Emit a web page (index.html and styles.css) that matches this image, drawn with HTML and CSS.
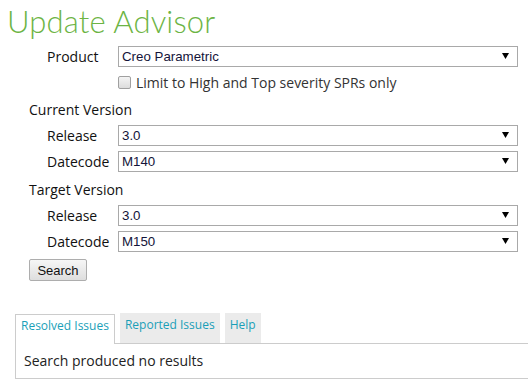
FILE: index.html
```html
<!DOCTYPE html>
<html>
<head>
<meta charset="utf-8">
<link rel="stylesheet" href="styles.css">
</head>
<body>
<h1 class="title">Update Advisor</h1>
<div class="form">
  <div class="row sub">
    <span class="label">Product</span>
    <div class="select"><span>Creo Parametric</span><svg class="arrow" width="7" height="6" viewBox="0 0 7 6"><path d="M0 0H7L3.5 6Z" fill="#000"/></svg></div>
  </div>
  <div class="row check">
    <span class="box"></span>
    <span class="checktext">Limit to High and Top severity SPRs only</span>
  </div>
  <div class="row head">Current Version</div>
  <div class="row sub">
    <span class="label">Release</span>
    <div class="select"><span>3.0</span><svg class="arrow" width="7" height="6" viewBox="0 0 7 6"><path d="M0 0H7L3.5 6Z" fill="#000"/></svg></div>
  </div>
  <div class="row sub">
    <span class="label">Datecode</span>
    <div class="select"><span>M140</span><svg class="arrow" width="7" height="6" viewBox="0 0 7 6"><path d="M0 0H7L3.5 6Z" fill="#000"/></svg></div>
  </div>
  <div class="row head second">Target Version</div>
  <div class="row sub">
    <span class="label">Release</span>
    <div class="select"><span>3.0</span><svg class="arrow" width="7" height="6" viewBox="0 0 7 6"><path d="M0 0H7L3.5 6Z" fill="#000"/></svg></div>
  </div>
  <div class="row sub">
    <span class="label">Datecode</span>
    <div class="select"><span>M150</span><svg class="arrow" width="7" height="6" viewBox="0 0 7 6"><path d="M0 0H7L3.5 6Z" fill="#000"/></svg></div>
  </div>
  <div class="btnrow"><button class="btn">Search</button></div>
</div>
<div class="tabs">
  <div class="tabbar">
    <span class="tab active">Resolved Issues</span>
    <span class="tab">Reported Issues</span>
    <span class="tab">Help</span>
  </div>
  <div class="panel">Search produced no results</div>
</div>
</body>
</html>
```
FILE: styles.css
```css
html, body {
  margin: 0;
  padding: 0;
  background: #fff;
}
body {
  font-family: "Open Sans", sans-serif;
  font-size: 14px;
  color: #222;
  width: 528px;
  overflow: hidden;
}
.title {
  margin: 0;
  padding: 3px 0 0 7px;
  height: 37px;
  font-family: "Lato", sans-serif;
  font-weight: 300;
  font-size: 31px;
  line-height: 36px;
  color: #6cb444;
  letter-spacing: 0.15px;
}
.form {
  padding-left: 29px;
  padding-top: 3px;
}
.row {
  display: flex;
  align-items: center;
  height: 26px;
}
.row.sub {
  padding-left: 18px;
}
.label {
  width: 71px;
  flex: none;
  color: #111;
}
.select {
  box-sizing: border-box;
  width: 400px;
  height: 21px;
  border: 1px solid #a9a9a9;
  display: flex;
  align-items: center;
  justify-content: space-between;
  padding: 0 8px 0 3px;
  font-family: "Liberation Sans", Arial, sans-serif;
  font-size: 13.3px;
  color: #14143a;
  background: #fff;
}
.arrow {
  display: block;
}
.row.check {
  padding-left: 89px;
  height: 27px;
}
.box {
  box-sizing: border-box;
  width: 13px;
  height: 13px;
  border: 1px solid #a0a0a0;
  border-radius: 2px;
  background: linear-gradient(#f4f4f4, #dcdcdc);
  margin-right: 5px;
  flex: none;
}
.checktext {
  color: #333;
}
.row.head {
  height: 26px;
  color: #111;
}
.row.head.second {
  margin-top: 2px;
}
.btnrow {
  padding-top: 5px;
}
.btn {
  box-sizing: border-box;
  width: 58px;
  height: 22px;
  border: 1px solid #adadad;
  border-radius: 2px;
  background: linear-gradient(#f6f6f6, #dedede);
  font-family: "Liberation Sans", Arial, sans-serif;
  font-size: 13px;
  color: #111;
  padding: 0;
}
.tabs {
  margin-top: 32px;
  margin-left: 15px;
}
.tabbar {
  display: flex;
  align-items: flex-end;
  height: 30px;
}
.tab {
  box-sizing: border-box;
  height: 30px;
  line-height: 24px;
  padding: 0 5px;
  margin-right: 5px;
  background: #ebebeb;
  color: #1a9fb8;
  font-size: 12px;
}
.tab.active {
  background: #fff;
  border: 1px solid #ccc;
  border-bottom: none;
  position: relative;
  top: 1px;
  padding: 0 5px;
  line-height: 22px;
}
.panel {
  box-sizing: border-box;
  height: 36px;
  border: 1px solid #ccc;
  border-right: none;
  padding: 0 0 0 8px;
  line-height: 34px;
  color: #222;
}
```
